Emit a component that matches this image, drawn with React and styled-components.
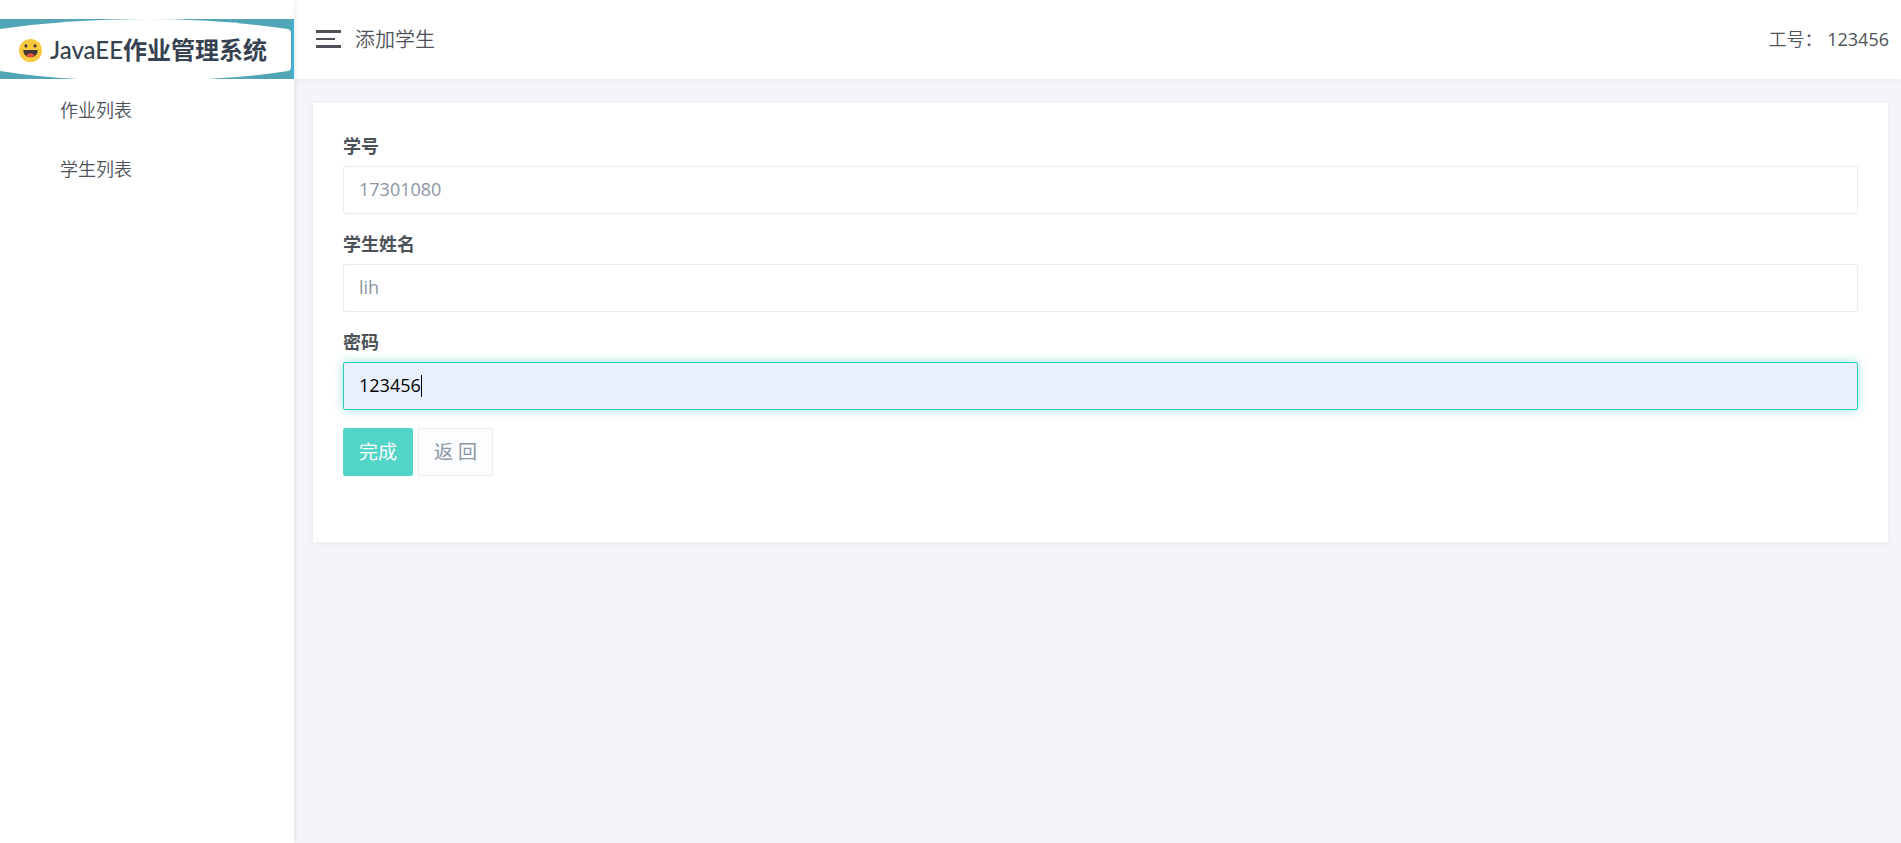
import React from "react";
import styled, { createGlobalStyle } from "styled-components";

const GlobalStyle = createGlobalStyle`
  * {
    box-sizing: border-box;
  }

  body {
    margin: 0;
    background-color: #f4f5fa;
    color: #4d5259;
    font-family: "Open Sans", "Noto Sans CJK SC", sans-serif;
    font-size: 18px;
    font-weight: 350;
  }
`;

const Layout = styled.div`
  display: flex;
  min-height: 100vh;
`;

const Sidebar = styled.aside`
  flex: 0 0 294px;
  padding-top: 19px;
  background-color: #fff;
  box-shadow: 0 0 5px rgba(0, 0, 0, 0.12);
  z-index: 1;
`;

const LogoLink = styled.a`
  display: flex;
  align-items: center;
  position: relative;
  height: 60px;
  padding: 2px 0 0 19px;
  color: #36424f;
  text-decoration: none;
`;

const LogoShape = styled.svg`
  position: absolute;
  top: 0;
  left: 0;
  width: 100%;
  height: 100%;
`;

const LogoFace = styled.svg`
  position: relative;
  flex: none;
  width: 23px;
  height: 23px;
  margin-right: 8px;
`;

const LogoText = styled.span`
  position: relative;
  font-family: Lato, "Noto Sans CJK SC", sans-serif;
  font-size: 24px;
  font-weight: 500;
  line-height: 32px;
  white-space: nowrap;

  b {
    font-weight: 700;
  }
`;

const Menu = styled.nav`
  display: flex;
  flex-direction: column;
  padding-top: 2px;
`;

const MenuLink = styled.a`
  padding-left: 60px;
  color: #4d5259;
  line-height: 59px;
  text-decoration: none;
`;

const Content = styled.div`
  flex: 1;
  min-width: 0;
`;

const Header = styled.header`
  display: flex;
  align-items: center;
  height: 79px;
  padding: 0 12px 2px 22px;
  background-color: #fff;
  box-shadow: 0 1px 8px rgba(0, 0, 0, 0.05);
`;

const ToggleButton = styled.button`
  display: flex;
  flex-direction: column;
  justify-content: space-between;
  width: 25px;
  height: 18px;
  margin-right: 14px;
  padding: 0;
  border: 0;
  background: none;
  cursor: pointer;
`;

const Bar = styled.span`
  width: ${(props) => (props.$short ? "19px" : "25px")};
  height: ${(props) => (props.$short ? "2px" : "3px")};
  background-color: #4d5259;
`;

const PageTitle = styled.h1`
  margin: 0;
  font-size: 20px;
  font-weight: 350;
`;

const UserInfo = styled.div`
  margin-left: auto;
  padding-bottom: 2px;
  white-space: pre;
`;

const UserNumber = styled.span`
  font-weight: 400;
`;

const Card = styled.form`
  margin: 24px 13px 0 19px;
  padding: 30px 30px 66px;
  background-color: #fff;
  box-shadow: 0 1px 5px rgba(0, 0, 0, 0.06);
`;

const Field = styled.div`
  margin-bottom: 17px;
`;

const Label = styled.label`
  display: block;
  margin-bottom: 7px;
  font-weight: 700;
  line-height: 26px;
`;

const InputBox = styled.div`
  position: relative;
`;

const Input = styled.input`
  display: block;
  width: 100%;
  height: 48px;
  padding: 0 15px 2px;
  border: 1px solid #ebebeb;
  border-radius: 2px;
  outline: none;
  background-color: ${(props) => (props.$filled ? "#e8f0fe" : "#fff")};
  color: ${(props) => (props.$filled ? "#000" : "#8b95a5")};
  caret-color: transparent;
  font-family: inherit;
  font-size: 18px;
  font-weight: 400;

  &:focus {
    border-color: #33cabb;
    box-shadow: 0 0 10px rgba(51, 202, 187, 0.5);
  }
`;

// sits right after the last typed digit
const Caret = styled.span`
  display: none;
  position: absolute;
  top: 13px;
  left: calc(16px + ${(props) => props.$length}ch);
  width: 1px;
  height: 22px;
  background-color: #000;
  font-weight: 400;
  pointer-events: none;

  ${Input}:focus + & {
    display: block;
  }
`;

const Actions = styled.div`
  display: flex;
  gap: 5px;
  padding-top: 1px;
`;

const Button = styled.button`
  height: 48px;
  padding: 0 15px 2px;
  border: 1px solid ${(props) => (props.$primary ? "#52d5c8" : "#ebebeb")};
  border-radius: 2px;
  background-color: ${(props) => (props.$primary ? "#52d5c8" : "#fcfdfe")};
  color: ${(props) => (props.$primary ? "#fff" : "#8b95a5")};
  font-family: inherit;
  font-size: 19px;
  font-weight: 400;
  cursor: pointer;
`;

const Logo = () => {
  return (
    <LogoLink href="#">
      <LogoShape viewBox="0 0 294 60" preserveAspectRatio="none" aria-hidden="true">
        <rect width="294" height="60" fill="#51a5b5" />
        <rect x="292" width="2" height="60" fill="#3db2e0" />
        <path
          d="M0 10 Q70 0 145 0 Q220 0 288 10 Q291 11 291 14 V48 Q291 51 288 52 Q250 58 207 60 H78 Q38 58 0 52 Z"
          fill="#fff"
        />
      </LogoShape>
      <LogoFace viewBox="0 0 24 24" aria-hidden="true">
        <circle cx="12" cy="12" r="12" fill="#f8c93e" />
        <circle cx="7.3" cy="7.2" r="1.6" fill="#3e3a35" />
        <circle cx="16.7" cy="7.2" r="1.6" fill="#3e3a35" />
        <path d="M4.5 11.5 H19.5 Q19.5 19 12 19 Q4.5 19 4.5 11.5 Z" fill="#3e3a35" />
        <path d="M7.5 17.2 Q12 12.5 16.5 17.2 Q12 20.6 7.5 17.2 Z" fill="#ee4b3f" />
      </LogoFace>
      <LogoText>
        JavaEE<b>作业管理系统</b>
      </LogoText>
    </LogoLink>
  );
};

const App = () => {
  const [password, setPassword] = React.useState("123456");

  return (
    <Layout lang="zh-CN">
      <GlobalStyle />
      <Sidebar>
        <Logo />
        <Menu>
          <MenuLink href="#homework">作业列表</MenuLink>
          <MenuLink href="#students">学生列表</MenuLink>
        </Menu>
      </Sidebar>
      <Content>
        <Header>
          <ToggleButton type="button" aria-label="菜单">
            <Bar />
            <Bar $short />
            <Bar />
          </ToggleButton>
          <PageTitle>添加学生</PageTitle>
          <UserInfo>
            工号： <UserNumber>123456</UserNumber>
          </UserInfo>
        </Header>
        <Card onSubmit={(e) => e.preventDefault()}>
          <Field>
            <Label htmlFor="id">学号</Label>
            <Input id="id" type="text" defaultValue="17301080" />
          </Field>
          <Field>
            <Label htmlFor="name">学生姓名</Label>
            <Input id="name" type="text" defaultValue="lih" />
          </Field>
          <Field>
            <Label htmlFor="password">密码</Label>
            <InputBox>
              <Input
                id="password"
                type="text"
                value={password}
                onChange={(e) => setPassword(e.target.value)}
                $filled
                autoFocus
              />
              <Caret $length={password.length} />
            </InputBox>
          </Field>
          <Actions>
            <Button type="submit" $primary>
              完成
            </Button>
            <Button type="button">返 回</Button>
          </Actions>
        </Card>
      </Content>
    </Layout>
  );
};

export default App;
